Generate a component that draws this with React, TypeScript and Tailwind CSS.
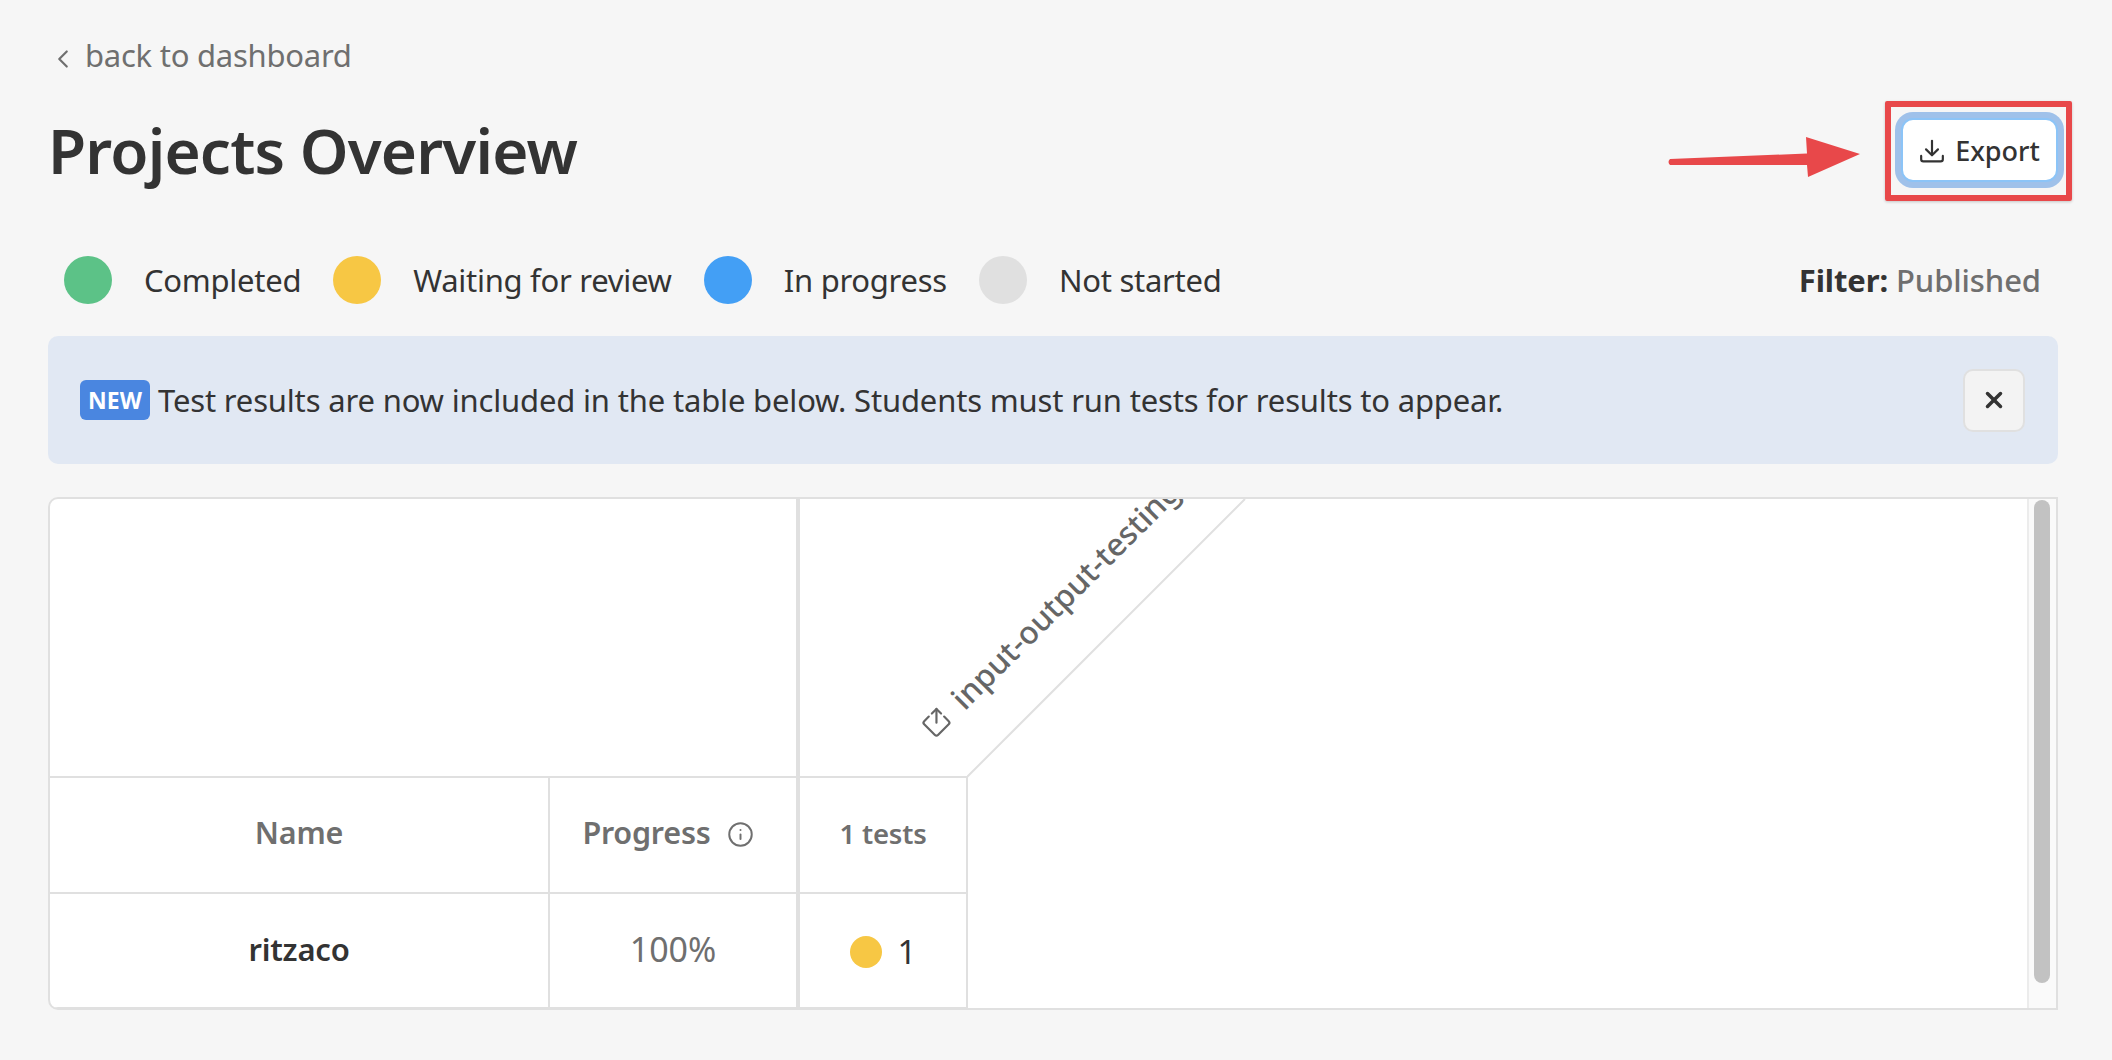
import { ChevronLeft, Info, SquareArrowOutUpRight, X } from "lucide-react";

const legend = [
  { label: "Completed", dot: "bg-[#5cc287]" },
  { label: "Waiting for review", dot: "bg-[#f7c744]" },
  { label: "In progress", dot: "bg-[#439ff5]" },
  { label: "Not started", dot: "bg-[#e0e0e0]" },
];

function ExportIcon() {
  return (
    <svg width="26" height="26" viewBox="0 0 24 24" fill="none" stroke="currentColor" strokeWidth="2" strokeLinecap="round" strokeLinejoin="round">
      <path d="M12 2.500v13" />
      <path d="M6.500 10.500 12 16l5.500-5.500" />
      <path d="M2 16.500v3a2 2 0 0 0 2 2h16a2 2 0 0 0 2-2v-3" />
    </svg>
  );
}

export default function App() {
  return (
    <div className="relative h-[1060px] overflow-hidden bg-[#f6f6f6] pt-9 pr-[54px] pl-12 font-['Noto_Sans',sans-serif] text-[#333]">
      <div className="flex h-[38px] items-center text-[#6f6f6f]">
        <ChevronLeft size={30} strokeWidth={1.75} className="mt-2" />
        <span className="ml-[7px] text-[31px] tracking-[-0.25px]">back to dashboard</span>
      </div>

      <div className="mt-[38px] flex h-[76px] items-center justify-between">
        <h1 className="text-[62px] leading-none font-semibold tracking-[-0.8px]">Projects Overview</h1>
        <div className="relative">
          <button className="flex h-16 w-[157px] items-center justify-center gap-[10px] rounded-[12px] border-2 border-[#8cc4f7] bg-white pt-[2px] text-[27px] font-medium shadow-[0_0_0_6px_#9fc1ea]">
            <ExportIcon />
            Export
          </button>
          <div className="absolute -top-[17px] -right-[14px] -bottom-[19px] -left-4 rounded-[2px] border-[6px] border-[#e8484a] shadow-[0_1px_3px_rgba(0,0,0,0.2)]" />
          <svg className="absolute top-[14px] -left-[236px]" width="200" height="48" viewBox="0 0 200 48" fill="#e8484a">
            <path d="M5 27 L142 21.500 L141 5 L195 22 L143 45 L142 33 L5 33 Q2 30 5 27 Z" />
          </svg>
        </div>
      </div>

      <div className="mt-[68px] flex h-12 items-center justify-between pr-[17px] pl-4">
        <div className="flex items-center text-[31px] tracking-[-0.27px]">
          {legend.map((item) => (
            <div key={item.label} className="mr-8 flex items-center">
              <span className={`mr-8 h-12 w-12 rounded-full ${item.dot}`} />
              <span>{item.label}</span>
            </div>
          ))}
        </div>
        <div className="text-[31px] tracking-[-0.1px]">
          <span className="font-bold">Filter:</span> <span className="font-medium text-[#6f6f6f]">Published</span>
        </div>
      </div>

      <div className="mt-8 flex h-32 items-center justify-between rounded-[10px] bg-[#e1e8f3] pr-[33px] pl-8">
        <div className="flex items-center">
          <span className="flex h-10 w-[70px] items-center justify-center rounded-[6px] bg-[#4a86e0] text-[23px] font-bold text-white">NEW</span>
          <span className="ml-2 text-[31px] tracking-[-0.17px]">Test results are now included in the table below. Students must run tests for results to appear.</span>
        </div>
        <button className="flex h-[63px] w-[62px] items-center justify-center rounded-[10px] border-2 border-[#e0e0e0] bg-[#f3f3f3]">
          <X size={26} strokeWidth={3.25} />
        </button>
      </div>

      <div className="mt-[33px] flex h-[513px] overflow-hidden rounded-tl-[10px] rounded-bl-[10px] border-2 border-[#e0e0e0] bg-white">
        <div className="relative flex-1 overflow-hidden">
          <div className="w-[918px]">
            <div className="flex h-[277px]">
              <div className="w-[750px] border-r-4 border-[#e0e0e0]" />
            </div>
            <div className="grid h-[118px] grid-cols-[500px_250px_168px] border-t-2 border-b-2 border-[#e0e0e0] text-center text-[#6f6f6f]">
              <div className="flex items-center justify-center border-r-2 border-[#e0e0e0] pb-[5px] text-[30.5px] font-semibold tracking-[-0.2px]">Name</div>
              <div className="flex items-center justify-center gap-4 border-r-4 border-[#e0e0e0] pr-[10px] pb-[5px] text-[30.5px] font-semibold tracking-[-0.2px]">
                Progress
                <Info size={27} strokeWidth={1.75} className="mt-1" />
              </div>
              <div className="flex items-center justify-center border-r-2 border-[#e0e0e0] pb-[2px] text-[27.5px] font-semibold tracking-[-0.2px]">1 tests</div>
            </div>
            <div className="grid h-[114px] grid-cols-[500px_250px_168px] border-b border-[#e0e0e0] text-center">
              <div className="flex items-center justify-center border-r-2 border-[#e0e0e0] pb-[3px] text-[31px] font-semibold tracking-[-0.2px]">ritzaco</div>
              <div className="flex items-center justify-center border-r-4 border-[#e0e0e0] pb-[3px] text-[34px] text-[#6f6f6f]">100%</div>
              <div className="flex items-center justify-center gap-4 border-r-2 border-[#e0e0e0] pt-[2px] text-[33px]">
                <span className="h-8 w-8 rounded-full bg-[#f7c744]" />1
              </div>
            </div>
          </div>
          <svg className="absolute top-0 left-[917px]" width="280" height="279" viewBox="0 0 280 279" fill="none" stroke="#e0e0e0" strokeWidth="2">
            <path d="M0 278 L278 0" />
          </svg>
          <div className="absolute top-[209px] left-[877px] flex origin-left -rotate-45 items-center gap-[15px] whitespace-nowrap text-[31.5px] font-medium text-[#666]">
            <SquareArrowOutUpRight size={26} strokeWidth={2} />
            <span>input-output-testing</span>
          </div>
        </div>
        <div className="w-[29px] border-l-2 border-[#ececec] bg-[#fafafa] pt-[1px] pl-[5px]">
          <div className="h-[483px] w-4 rounded-full bg-[#c2c2c2]" />
        </div>
      </div>
    </div>
  );
}
